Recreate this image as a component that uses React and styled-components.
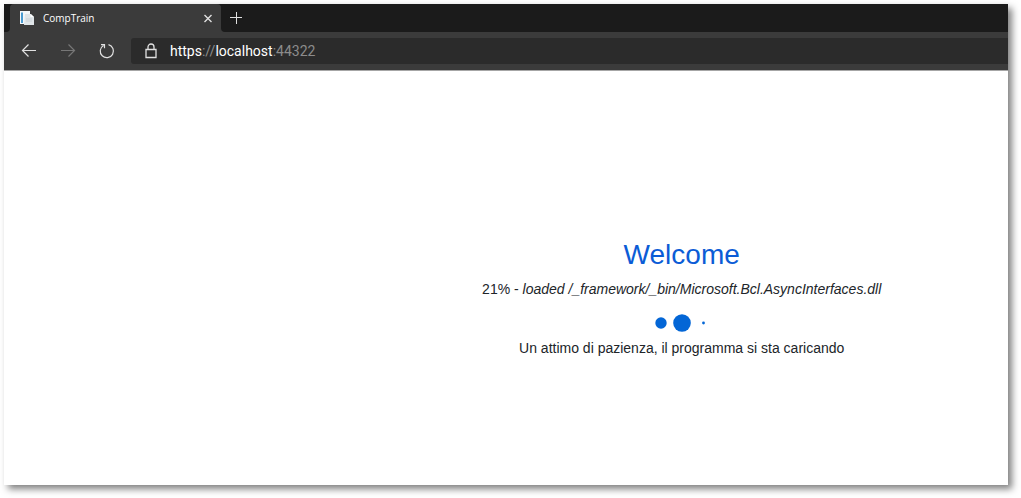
import React from "react";
import styled, { createGlobalStyle } from "styled-components";

const GlobalStyle = createGlobalStyle`
  *, *::before, *::after { box-sizing: border-box; }
  html, body { margin: 0; background: #fff; }
  button, input { font: inherit; color: inherit; }
`;

const Page = styled.div`
  min-height: 100vh;
  padding: 4px 13px 13px 4px;
  display: flex;
`;

const BrowserWindow = styled.div`
  flex: 1;
  min-width: 0;
  display: flex;
  flex-direction: column;
  overflow: hidden;
  background: #fff;
  box-shadow: 4px 4px 7px rgba(0, 0, 0, 0.5);
  font-family: "Open Sans", "Noto Sans", sans-serif;
`;

const TabStrip = styled.div`
  display: flex;
  height: 28px;
  background: #3b3b3b;
`;

const StripStart = styled.div`
  width: 6px;
  border-radius: 0 0 4px 0;
  background: #1b1b1b;
`;

const StripRest = styled.div`
  flex: 1;
  display: flex;
  align-items: center;
  padding-left: 7px;
  border-radius: 0 0 0 4px;
  background: #1b1b1b;
`;

const TabSlot = styled.div`
  display: flex;
  background: #1b1b1b;
  border-radius: 0 0 4px 4px;
`;

const Tab = styled.div`
  display: flex;
  align-items: center;
  width: 211px;
  padding: 0 7px 0 9px;
  border-radius: 4px 4px 0 0;
  background: #3b3b3b;
`;

const TabTitle = styled.span`
  flex: 1;
  margin-left: 8px;
  color: #fff;
  font-size: 10px;
  line-height: 16px;
`;

const IconButton = styled.button`
  display: flex;
  align-items: center;
  justify-content: center;
  flex: none;
  width: ${(p) => p.$size}px;
  height: ${(p) => p.$size}px;
  padding: 0;
  border: 0;
  background: none;
  color: ${(p) => (p.disabled ? "#777" : "#e0e0e0")};
`;

const Toolbar = styled.div`
  display: flex;
  align-items: center;
  height: 39px;
  padding-left: 17px;
  background: #3b3b3b;
  border-bottom: 1px solid #a6a6a6;
`;

const NavButtons = styled.div`
  display: flex;
  gap: 23px;
`;

const AddressBar = styled.div`
  flex: 1;
  display: flex;
  align-items: center;
  height: 26px;
  margin-left: 16px;
  padding-left: 12px;
  border-radius: 3px 0 0 3px;
  background: #2b2b2b;
`;

const Address = styled.span`
  margin-left: 11px;
  color: #8c8c8c;
  font-family: Roboto, "Open Sans", sans-serif;
  font-size: 14px;
  line-height: 20px;
`;

const AddressPart = styled.span`
  color: #fff;
`;

const Content = styled.main`
  flex: 1;
  display: flex;
  flex-direction: column;
  align-items: center;
  justify-content: center;
  padding: 41px 0 0 35%;
  color: #212529;
  font-family: "Liberation Sans", Arial, sans-serif;
  text-align: center;
`;

const Heading = styled.h1`
  margin: 0 0 8px;
  color: #0b5cd6;
  font-size: 28px;
  font-weight: 400;
  line-height: 32px;
`;

const Message = styled.p`
  margin: 0;
  font-size: 14px;
  line-height: 20px;
`;

const Loader = styled.svg`
  display: block;
  margin: 14px 0 5px;
`;

const stroke = { fill: "none", stroke: "currentColor", strokeWidth: 1.2 };

const PageIcon = () => (
  <svg width="16" height="16" viewBox="0 0 16 16" aria-hidden="true">
    <path d="M1 1h10v13H1z" fill="#f4f7f9" />
    <path d="M2 2.500h2v10.500H2z" fill="#4a9bd0" />
    <path d="M6 4h6l3 3v8H5z" fill="#dfe5e8" />
    <path d="M11.500 4v3H15z" fill="#fff" />
    <path d="M7 9h6M7 11h6" stroke="#c9d1d6" fill="none" />
  </svg>
);

export default function App() {
  return (
    <Page>
      <GlobalStyle />
      <BrowserWindow>
        <TabStrip>
          <StripStart />
          <TabSlot>
            <Tab>
              <PageIcon />
              <TabTitle>CompTrain</TabTitle>
              <IconButton $size={12} aria-label="Close tab">
                <svg width="12" height="12" viewBox="0 0 12 12" {...stroke} strokeWidth={1.4}>
                  <path d="M2.500 3l7 7M9.500 3l-7 7" />
                </svg>
              </IconButton>
            </Tab>
          </TabSlot>
          <StripRest>
            <IconButton $size={16} aria-label="New tab">
              <svg width="16" height="16" viewBox="0 0 16 16" {...stroke} strokeWidth={1}>
                <path d="M2 7.500h12M8.500 2v12" />
              </svg>
            </IconButton>
          </StripRest>
        </TabStrip>
        <Toolbar>
          <NavButtons>
            <IconButton $size={16} aria-label="Back">
              <svg width="16" height="16" viewBox="0 0 16 16" {...stroke}>
                <path d="M15 7.500H1.500M7.500 1.500l-6 6 6 6" />
              </svg>
            </IconButton>
            <IconButton $size={16} aria-label="Forward" disabled>
              <svg width="16" height="16" viewBox="0 0 16 16" {...stroke}>
                <path d="M1 7.500h13.500M8.500 1.500l6 6-6 6" />
              </svg>
            </IconButton>
            <IconButton $size={16} aria-label="Refresh">
              <svg width="16" height="16" viewBox="0 0 16 16" {...stroke}>
                <path d="M9.500 1.700A6.600 6.600 0 1 1 4.500 2.400M2 1.600h3.500v3.600" />
              </svg>
            </IconButton>
          </NavButtons>
          <AddressBar>
            <svg width="16" height="16" viewBox="0 0 16 16" fill="none" stroke="#e0e0e0" strokeWidth="1.3" aria-hidden="true">
              <path d="M3 6.500h10v8H3z" />
              <path d="M5 6.500V4a3 3 0 0 1 6 0v2.500" />
            </svg>
            <Address>
              <AddressPart>https</AddressPart>://<AddressPart>localhost</AddressPart>:44322
            </Address>
          </AddressBar>
        </Toolbar>
        <Content>
          <Heading>Welcome</Heading>
          <Message>
            21% - <em>loaded /_framework/_bin/Microsoft.Bcl.AsyncInterfaces.dll</em>
          </Message>
          <Loader width="60" height="20" viewBox="0 0 60 20" fill="#0366d6" role="img" aria-label="Loading">
            <circle cx="9" cy="10" r="5.700" />
            <circle cx="30" cy="10" r="8.800" />
            <circle cx="51.500" cy="10" r="1.400" />
          </Loader>
          <Message>Un attimo di pazienza, il programma si sta caricando</Message>
        </Content>
      </BrowserWindow>
    </Page>
  );
}
